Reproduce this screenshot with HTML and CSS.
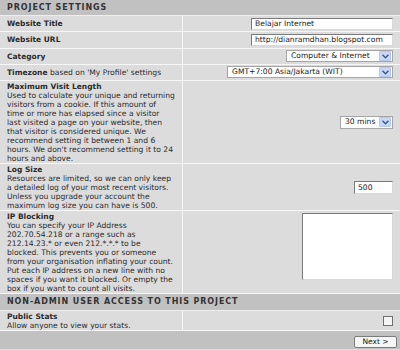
FILE: index.html
```html
<!DOCTYPE html>
<html lang="en">
<head>
  <meta charset="UTF-8" />
  <title>Project Settings</title>
  <link rel="stylesheet" href="styles.css">
</head>
<body>

  <div class="panel">
    <div class="section">Project Settings</div>

    <div class="row short">
      <div class="label"><b>Website Title</b></div>
      <div class="field"><div class="text w-title">Belajar Internet</div></div>
    </div>
    <div class="row short">
      <div class="label"><b>Website URL</b></div>
      <div class="field"><div class="text w-title">http://dianramdhan.blogspot.com</div></div>
    </div>
    <div class="row short">
      <div class="label"><b>Category</b></div>
      <div class="field">
        <div class="select w-cat"><span>Computer &amp; Internet</span><i class="arrow"><svg width="7" height="5" viewBox="0 0 7 5"><path d="M0.5 0.8 L3.5 3.8 L6.5 0.8" fill="none" stroke="#3d5a8c" stroke-width="1.5"/></svg></i></div>
      </div>
    </div>
    <div class="row short">
      <div class="label"><b>Timezone</b> based on 'My Profile' settings</div>
      <div class="field">
        <div class="select w-tz"><span>GMT+7:00 Asia/Jakarta (WIT)</span><i class="arrow"><svg width="7" height="5" viewBox="0 0 7 5"><path d="M0.5 0.8 L3.5 3.8 L6.5 0.8" fill="none" stroke="#3d5a8c" stroke-width="1.5"/></svg></i></div>
      </div>
    </div>
    <div class="row">
      <div class="label"><b>Maximum Visit Length</b><br>
        Used to calculate your unique and returning<br>
        visitors from a cookie. If this amount of<br>
        time or more has elapsed since a visitor<br>
        last visited a page on your website, then<br>
        that visitor is considered unique. We<br>
        recommend setting it between 1 and 6<br>
        hours. We don't recommend setting it to 24<br>
        hours and above.</div>
      <div class="field">
        <div class="select w-mins"><span>30 mins</span><i class="arrow"><svg width="7" height="5" viewBox="0 0 7 5"><path d="M0.5 0.8 L3.5 3.8 L6.5 0.8" fill="none" stroke="#3d5a8c" stroke-width="1.5"/></svg></i></div>
      </div>
    </div>
    <div class="row">
      <div class="label"><b>Log Size</b><br>
        Resources are limited, so we can only keep<br>
        a detailed log of your most recent visitors.<br>
        Unless you upgrade your account the<br>
        maximum log size you can have is 500.</div>
      <div class="field"><div class="text w-log">500</div></div>
    </div>
    <div class="row">
      <div class="label"><b>IP Blocking</b><br>
        You can specify your IP Address<br>
        202.70.54.218 or a range such as<br>
        212.14.23.* or even 212.*.*.* to be<br>
        blocked. This prevents you or someone<br>
        from your organisation inflating your count.<br>
        Put each IP address on a new line with no<br>
        spaces if you want it blocked. Or empty the<br>
        box if you want to count all visits.</div>
      <div class="field top"><div class="area"></div></div>
    </div>

    <div class="section second">Non-Admin User Access to this Project</div>

    <div class="row">
      <div class="label"><b>Public Stats</b><br>
        Allow anyone to view your stats.</div>
      <div class="field"><div class="check"></div></div>
    </div>

    <div class="footer">
      <div class="next">Next &gt;</div>
    </div>
  </div>

</body>
</html>
```

FILE: styles.css
```css
body {
  margin: 0;
  background-color: #dcdcdc;
  font-family: "DejaVu Sans", Verdana, sans-serif;
  color: #2b2b2b;
}
.panel {
  width: 400px;
  height: 350px;
  overflow: hidden;
}
.section {
  height: 15px;
  padding-left: 7px;
  background-color: #c1c1c1;
  font-size: 8px;
  font-weight: bold;
  letter-spacing: 0.9px;
  line-height: 15px;
  text-transform: uppercase;
  color: #333;
  border-bottom: 1px solid #eeeeee;
}
.section.second {
  height: 16px;
  line-height: 16px;
}
.row {
  display: grid;
  grid-template-columns: 183px 1fr;
  border-bottom: 1px solid #f7f7f7;
}
.row.short {
  height: 15.25px;
}
.label {
  padding: 1px 0 0 7px;
  font-size: 7.6px;
  line-height: 9px;
  white-space: nowrap;
  border-right: 1px solid #f7f7f7;
}
.row.short .label {
  padding: 0 0 0 7px;
  line-height: 15px;
}
.label b {
  font-size: 7.5px;
}
.field {
  display: flex;
  align-items: center;
  justify-content: flex-end;
  padding-right: 7px;
}
.field.top {
  align-items: flex-start;
  padding-top: 2px;
}
.text {
  height: 10px;
  padding: 0 3px;
  background-color: white;
  border: 1px solid;
  border-color: #7a7a7a #d8d8d8 #d8d8d8 #7a7a7a;
  font-size: 7.6px;
  line-height: 10px;
  color: #222;
}
.w-title {
  width: 134px;
}
.w-log {
  width: 31px;
  height: 11px;
  line-height: 11px;
}
.select {
  display: flex;
  align-items: center;
  justify-content: space-between;
  height: 10px;
  padding: 0 1px 0 4px;
  background-color: white;
  border: 1px solid #a5a5a5;
  font-size: 7.6px;
  line-height: 10px;
  color: #222;
}
.w-cat {
  width: 100px;
}
.w-tz {
  width: 159px;
}
.w-mins {
  width: 46px;
  height: 11px;
}
.arrow {
  display: flex;
  align-items: center;
  justify-content: center;
  width: 10px;
  height: 8px;
  background-color: #c9d8f7;
  border: 1px solid #b3c6ee;
  border-radius: 1px;
}
.area {
  width: 89px;
  height: 65px;
  background-color: white;
  border: 1px solid;
  border-color: #7a7a7a #d8d8d8 #d8d8d8 #7a7a7a;
}
.check {
  width: 8px;
  height: 8px;
  background-color: #f4f4f4;
  border: 1px solid #6f6f6f;
}
.footer {
  display: flex;
  justify-content: flex-end;
  height: 18px;
  padding: 5px 3px 0 0;
  box-sizing: border-box;
  background-color: #c1c1c1;
}
.next {
  width: 41px;
  height: 10px;
  background-color: #f6f6f6;
  border: 1px solid #7c7c7c;
  border-radius: 2px;
  font-size: 7.5px;
  line-height: 10px;
  text-align: center;
  color: #222;
}
```
